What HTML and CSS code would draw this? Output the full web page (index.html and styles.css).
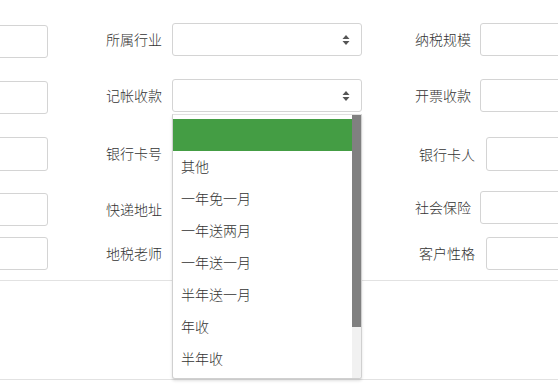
FILE: index.html
```html
<!DOCTYPE html>
<html lang="zh">
<head>
<meta charset="utf-8">
<link rel="stylesheet" href="styles.css">
</head>
<body>
<div class="page">
  <form class="form">
    <div class="row r1">
      <div class="input left"></div>
      <label class="lab1">所属行业</label>
      <div class="select"><svg class="caret" width="8" height="12" viewBox="0 0 8 12"><path d="M4 1 L7.5 5 H0.5 Z M4 11 L7.5 7 H0.5 Z" fill="#555"/></svg></div>
      <label class="lab2">纳税规模</label>
      <div class="input right"></div>
    </div>
    <div class="row r2">
      <div class="input left"></div>
      <label class="lab1">记帐收款</label>
      <div class="select open"><svg class="caret" width="8" height="12" viewBox="0 0 8 12"><path d="M4 1 L7.5 5 H0.5 Z M4 11 L7.5 7 H0.5 Z" fill="#555"/></svg>
        <div class="dropdown">
          <ul class="options">
            <li class="selected"></li>
            <li>其他</li>
            <li>一年免一月</li>
            <li>一年送两月</li>
            <li>一年送一月</li>
            <li>半年送一月</li>
            <li>年收</li>
            <li>半年收</li>
          </ul>
          <div class="scrollbar"><div class="thumb"></div></div>
        </div>
      </div>
      <label class="lab2">开票收款</label>
      <div class="input right"></div>
    </div>
    <div class="row r3">
      <div class="input left"></div>
      <label class="lab1">银行卡号</label>
      <div class="input mid"></div>
      <label class="lab2 wide">银行卡人</label>
      <div class="input right"></div>
    </div>
    <div class="row r4">
      <div class="input left"></div>
      <label class="lab1">快递地址</label>
      <div class="input mid"></div>
      <label class="lab2">社会保险</label>
      <div class="input right"></div>
    </div>
    <div class="row r5">
      <div class="input left"></div>
      <label class="lab1">地税老师</label>
      <div class="input mid"></div>
      <label class="lab2 wide">客户性格</label>
      <div class="input right"></div>
    </div>
  </form>
  <div class="footer"></div>
</div>
</body>
</html>
```
FILE: styles.css
```css
html, body {
  margin: 0;
  padding: 0;
  background: #fff;
  overflow: hidden;
}
body {
  width: 558px;
  height: 390px;
  font-family: "Noto Sans CJK SC", "Microsoft YaHei", sans-serif;
  font-size: 14px;
  font-weight: 300;
  color: #333;
}
.page {
  width: 558px;
}
.form {
  padding-top: 23px;
  padding-bottom: 10px;
  border-bottom: 1px solid #e2e2e2;
}
.row {
  display: flex;
  align-items: flex-start;
  height: 34px;
}
.r1 { height: 35px; }
.r2 { margin-top: 21px; height: 35px; }
.r3 { margin-top: 23px; height: 34px; }
.r4 { margin-top: 20px; height: 35px; }
.r5 { margin-top: 11px; height: 33px; }

.input, .select {
  box-sizing: border-box;
  height: 33px;
  border: 1px solid #d4d4d4;
  border-radius: 3px;
  background: #fff;
  flex: none;
}
.input.left {
  width: 60px;
  margin-left: -12px;
  margin-top: 2px;
}
.r3 .input.left { margin-top: 0; height: 34px; }
.r5 .input.left { margin-top: 0; height: 33px; }
.lab1 {
  width: 124px;
  box-sizing: border-box;
  padding-right: 10px;
  text-align: right;
  line-height: 33px;
  flex: none;
}
.r4 .lab1 { margin-top: 1px; line-height: 34px; }
.select, .input.mid {
  width: 190px;
  position: relative;
}
.input.mid { visibility: hidden; }
.caret {
  position: absolute;
  right: 11px;
  top: 10px;
}
.lab2 {
  width: 118px;
  box-sizing: border-box;
  padding-right: 9px;
  text-align: right;
  line-height: 33px;
  flex: none;
}
.lab2.wide { width: 124px; padding-right: 11px; }
.r3 .lab2 { line-height: 34px; }
.input.right {
  width: 120px;
}
.r3 .input.right { height: 34px; }

.dropdown {
  position: absolute;
  left: -1px;
  top: 34px;
  width: 190px;
  height: 265px;
  box-sizing: border-box;
  border: 1px solid #d0d0d0;
  border-top-color: #e0e0e0;
  border-radius: 0 0 3px 3px;
  background: #fff;
  box-shadow: 0 2px 3px rgba(0,0,0,0.12);
  display: flex;
  overflow: hidden;
  z-index: 10;
}
.options {
  list-style: none;
  margin: 0;
  padding: 4px 0 0;
  flex: 1;
  overflow: hidden;
}
.options li {
  height: 32px;
  line-height: 31px;
  padding-left: 8px;
  color: #333;
  white-space: nowrap;
}
.options li.selected {
  background: #449d44;
}
.scrollbar {
  width: 9px;
  flex: none;
  background: #f1f1f1;
  display: flex;
  flex-direction: column;
}
.thumb {
  height: 212px;
  background: #808080;
}
.footer {
  height: 98px;
  border-bottom: 1px solid #e2e2e2;
}
```
